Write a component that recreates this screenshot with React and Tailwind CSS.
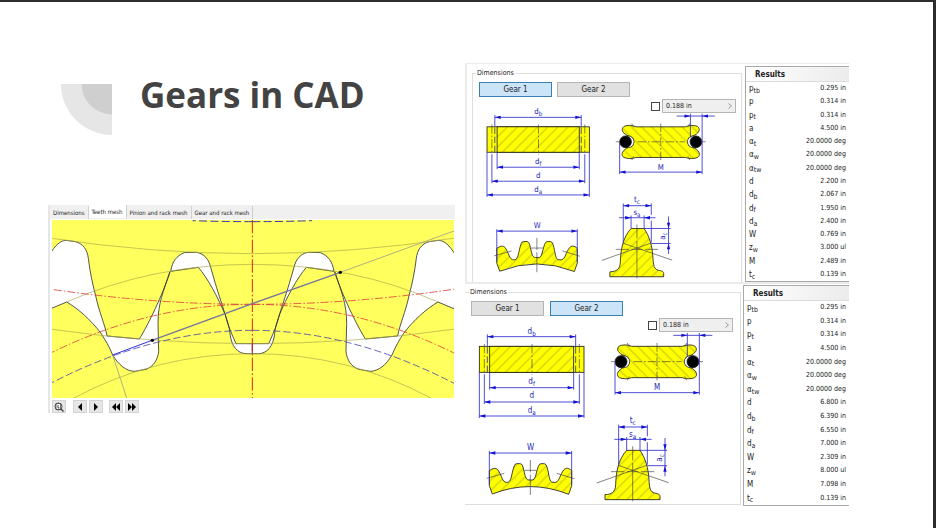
const UI = 'font-["DejaVu_Sans_Condensed","DejaVu_Sans",sans-serif]';
const INK = '#1c1c1c';
const DIM = '#2a2acb';

const RESULTS = [
  ['p', 'tb', '0.295 in', '0.295 in'],
  ['p', '', '0.314 in', '0.314 in'],
  ['p', 't', '0.314 in', '0.314 in'],
  ['a', '', '4.500 in', '4.500 in'],
  ['α', 't', '20.0000 deg', '20.0000 deg'],
  ['α', 'w', '20.0000 deg', '20.0000 deg'],
  ['α', 'tw', '20.0000 deg', '20.0000 deg'],
  ['d', '', '2.200 in', '6.800 in'],
  ['d', 'b', '2.067 in', '6.390 in'],
  ['d', 'f', '1.950 in', '6.550 in'],
  ['d', 'a', '2.400 in', '7.000 in'],
  ['W', '', '0.769 in', '2.309 in'],
  ['z', 'w', '3.000 ul', '8.000 ul'],
  ['M', '', '2.489 in', '7.098 in'],
  ['t', 'c', '0.139 in', '0.139 in'],
];

function HalfMesh() {
  return (
    <g fill="none" strokeWidth="2">
      <g fill="#fff" stroke="#333" strokeWidth="2.5" strokeLinejoin="round">
        <path d="M10 164C28 136 42 122 60 121L88 125C112 131 124 150 127 175C132 215 139 250 148 283C160 340 176 370 183 408L280 417C306 375 350 285 372 215C352 275 336 310 336 370L338 455C335 480 322 500 300 508L265 514C240 513 218 495 200 465C190 440 178 420 165 400C135 360 95 325 62 306L10 328Z" />
        <path d="M374 214L457 202C485 235 515 290 538 345C527 310 512 265 505 240L492 195C485 170 465 158 450 157L415 158C390 168 379 185 374 214Z" />
        <path d="M538 345C545 375 552 390 570 431H619V461H600C575 460 556 440 552 400C550 380 545 365 538 345Z" />
      </g>
      <g stroke="#a9a94c">
        <path d="M10 114Q320 161 619 161" />
        <path d="M62 306Q320 193 619 193" />
        <path d="M10 387Q320 431 619 431" />
        <path d="M80 596Q330 461 619 461" />
      </g>
      <g stroke="#e04040" strokeWidth="2.5" strokeDasharray="24 6 5 6">
        <path d="M619 313Q320 313 10 267" />
        <path d="M619 313Q310 313 10 461" />
      </g>
      <path d="M619 391Q320 391 10 552" stroke="#4a4aa8" strokeWidth="2.5" strokeDasharray="22 9" />
      <path d="M619 65Q530 65 440 62" stroke="#3a3aa8" strokeWidth="3" strokeDasharray="24 10" />
    </g>
  );
}

function MeshDrawing() {
  return (
    <svg viewBox="18 60 1206 534" className="block w-full bg-[#ffff5e]" role="img" aria-label="Teeth mesh">
      <HalfMesh />
      <g transform="matrix(-1 0 0 1 1238 0)"><HalfMesh /></g>
      <path d="M619 60V594" stroke="#e02020" strokeWidth="3" strokeDasharray="40 7 5 7" />
      <path d="M883 217L1224 93M200 465L242 594" stroke="#a0a08c" strokeWidth="2.5" />
      <path d="M318 421L619 311L883 217" fill="none" stroke="#77779c" strokeWidth="4.5" />
      <path d="M200 465L318 421" stroke="#3030e0" strokeWidth="3" />
      <circle cx="319" cy="421" r="5" />
      <circle cx="883" cy="217" r="5" />
    </svg>
  );
}

function Arrow({ x, y, turn }) {
  return <path d="M0 0L-18 -5V5Z" transform={`translate(${x} ${y}) rotate(${turn})`} fill="#1010d8" stroke="none" />;
}

function Span({ x1, x2, y }) {
  return (
    <>
      <path d={`M${x1} ${y}H${x2}`} />
      <Arrow x={x1} y={y} turn={180} />
      <Arrow x={x2} y={y} turn={0} />
    </>
  );
}

function Mark({ x, y, base, sub, turn = 0 }) {
  return (
    <text
      transform={`translate(${x} ${y}) rotate(${turn})`}
      textAnchor="middle"
      fill="#2626b8"
      stroke="none"
      className='font-["DejaVu_Sans_Condensed","DejaVu_Sans",sans-serif] text-[24px]'
    >
      {base}
      {sub && <tspan dy="6" fontSize="19">{sub}</tspan>}
    </text>
  );
}

const PIN_GEAR = 'M500 190C490 184 470 185 463 189C454 197 457 207 471 215L490 224Q496 236 490 248L471 256C455 266 454 278 463 284C472 288 490 289 500 284H652C662 289 680 288 689 284C698 278 697 266 681 256L662 248Q656 236 662 224L681 215C695 207 698 197 689 189C682 185 662 184 652 190Z';
const RIM = 'M73 563C84 555 92 554 98 560C110 575 112 600 125 598C140 600 138 575 148 548Q150 542 155 542H166Q172 543 174 552C180 575 181 592 192 591H200C212 592 211 575 220 550Q223 542 228 542H238Q244 543 246 552C253 575 252 599 264 598H272C284 595 284 575 297 560C303 554 310 554 320 563V608L311 634Q196 588 82 633L73 608Z';
const TOOTH = 'M485 502H525C541 525 550 555 552 590C553 615 556 627 568 630C580 632 585 634 585 640V650H420V635C440 634 451 628 452 605C453 570 459 530 485 502Z';

function GearDrawing({ id }) {
  const fill = `url(#${id})`;
  const reverse = `url(#${id}-reverse)`;
  return (
    <svg viewBox="0 120 810 540" className="col-start-1 row-start-1 block w-full" role="img" aria-label="Gear dimensions">
      <defs>
        <pattern id={id} width="22" height="22" patternUnits="userSpaceOnUse" patternTransform="rotate(45)">
          <rect width="22" height="22" fill="#ffff00" />
          <path d="M11 0V22" stroke="#a2a222" strokeWidth="2" />
        </pattern>
        <pattern id={`${id}-reverse`} width="22" height="22" patternUnits="userSpaceOnUse" patternTransform="rotate(-45)">
          <rect width="22" height="22" fill="#ffff00" />
          <path d="M11 0V22" stroke="#a2a222" strokeWidth="2" />
        </pattern>
      </defs>

      <g fill="none" stroke={INK} strokeWidth="2.5">
        <rect x="43" y="190" width="314" height="78" fill="#ffff00" />
        <rect x="74" y="190" width="252" height="78" fill={fill} />
        <path d={PIN_GEAR} fill={reverse} />
        <path d={RIM} fill={fill} />
        <path d={TOOTH} fill={fill} />
        <circle cx="476" cy="236" r="18" fill="#fff" strokeWidth="2" />
        <circle cx="676" cy="236" r="18" fill="#fff" strokeWidth="2" />
        <circle cx="468" cy="236" r="18" fill="#000" />
        <circle cx="684" cy="236" r="18" fill="#000" />
      </g>

      <g fill="none" stroke="#444" strokeWidth="2">
        <path d="M201 183V275M58 183V275M343 183V275" strokeDasharray="28 6 5 6" />
        <path d="M576 180V294M505 236H650M487 180L493 192M665 180L659 192M487 292L493 280M665 292L659 280" strokeDasharray="26 6 5 6" />
        <path d="M438 236H452M700 236H714" />
        <path d="M196 531V568M196 575V636M178 562H214M65 586L118 571M275 571L328 587" />
        <path d="M503 490V532M503 540V655M395 600L545 547M611 599L460 547M438 566H478M486 566H520M528 566H568" />
      </g>
      <path d="M67 192V268M332 192V268" stroke="#3333aa" strokeWidth="2.5" strokeDasharray="20 8" />

      <g fill="none" stroke={DIM} strokeWidth="2.5">
        <path d="M67 154V190M332 154V190M74 268V320M326 268V320M58 275V363M343 275V363M43 268V405M357 268V405" />
        <Span x1={67} x2={332} y={161} />
        <Span x1={74} x2={326} y={314} />
        <Span x1={58} x2={343} y={357} />
        <Span x1={43} x2={357} y={399} />

        <path d="M450 240V335M703 150V335M667 150V222M625 157H742" />
        <Span x1={450} x2={703} y={329} />
        <Arrow x={667} y={157} turn={0} />
        <Arrow x={703} y={157} turn={180} />

        <path d="M73 504V605M320 504V605" />
        <Span x1={73} x2={320} y={510} />

        <path d="M461 425V545M547 425V460M547 478V545M485 462V502M525 462V502M448 469H560M525 502H606M547 548H606M600 465V580" />
        <Span x1={461} x2={547} y={432} />
        <Arrow x={485} y={469} turn={0} />
        <Arrow x={525} y={469} turn={180} />
        <Arrow x={600} y={502} turn={90} />
        <Arrow x={600} y={548} turn={-90} />
      </g>

      <Mark x={200} y={152} base="d" sub="b" />
      <Mark x={200} y={304} base="d" sub="f" />
      <Mark x={200} y={346} base="d" />
      <Mark x={200} y={390} base="d" sub="a" />
      <Mark x={576} y={321} base="M" />
      <Mark x={197} y={501} base="W" />
      <Mark x={503} y={421} base="t" sub="c" />
      <Mark x={503} y={461} base="s" sub="a" />
      <Mark x={590} y={525} base="a" sub="c" turn={-90} />
    </svg>
  );
}

function GearButton({ active, children }) {
  const tone = active ? 'border-[#3c7fb1] bg-[#cce4f7]' : 'border-[#b4b4b4] bg-[#e1e1e1]';
  return (
    <button type="button" aria-pressed={active} className={`h-[15px] w-[73px] border text-[8px] leading-3 text-[#222] ${tone}`}>
      {children}
    </button>
  );
}

function PinSize({ id, className }) {
  return (
    <div className={`z-10 col-start-1 row-start-1 flex items-center gap-[2px] self-start justify-self-end ${className}`}>
      <input type="checkbox" aria-label="Custom pin size" className="size-[9px] appearance-none border border-[#444] bg-white" />
      <div className="flex h-[14px] w-[74px] items-center border border-[#b5b5b5] bg-[#efefef] px-[3px]">
        <input id={id} aria-label="Pin size" defaultValue="0.188 in" className="w-full min-w-0 flex-1 bg-transparent text-[7px] leading-3 text-[#222] outline-none" />
        <button type="button" aria-label="More sizes">
          <svg viewBox="0 0 4 6" className="h-[6px] w-1" fill="none" stroke="#999" strokeWidth="1"><path d="M.5 .5L3.5 3L.5 5.5" /></svg>
        </button>
      </div>
    </div>
  );
}

function Results({ gear, className }) {
  return (
    <section className={`flex flex-none flex-col border border-r-0 border-[#a9a9a9] bg-white ${className}`}>
      <h2 className="h-[15px] flex-none border-b border-[#dcdcdc] bg-linear-to-r from-white to-[#ececec] pl-[9px] text-[8px] leading-[15px] font-bold text-[#222]">
        Results
      </h2>
      <table className="w-full flex-1 text-[7px] leading-[9px] text-[#222]">
        <tbody>
          {RESULTS.map((row) => (
            <tr key={row[0] + row[1]} className="h-[13px]">
              <th scope="row" className="pl-[3px] text-left text-[8px] font-normal">
                {row[0]}
                {row[1] && <sub className="text-[7px] leading-none">{row[1]}</sub>}
              </th>
              <td className="pr-[3px] text-right whitespace-nowrap">{row[gear + 1]}</td>
            </tr>
          ))}
        </tbody>
      </table>
    </section>
  );
}

function TopPanel() {
  return (
    <article className="flex h-[219px] gap-[3px] border-t border-l-2 border-[#ebebeb] pl-[5px]">
      <fieldset className="mt-1 min-w-0 flex-1 border border-b-0 border-[#dedede] px-[6px]">
        <legend className="-ml-[3px] px-[1px] text-[7px] leading-[10px] text-[#222]">Dimensions</legend>
        <div className="mt-[4px] flex gap-[5px]">
          <GearButton active>Gear 1</GearButton>
          <GearButton>Gear 2</GearButton>
        </div>
        <div className="-mx-[6px] mt-[2px] grid">
          <PinSize id="pin-one" className="mr-[5px]" />
          <div className="col-start-1 row-start-1 mt-[5px] mr-1"><GearDrawing id="hatch-one" /></div>
        </div>
      </fieldset>
      <Results gear={1} className="mt-[2px] w-[104px]" />
    </article>
  );
}

function BottomPanel() {
  return (
    <article className="flex h-[225px] gap-[2px] border-t-2 border-[#ebebeb]">
      <fieldset className="mt-[3px] mb-[2px] min-w-0 flex-1 border border-l-0 border-[#dedede]">
        <legend className="ml-1 px-[1px] text-[7px] leading-[10px] text-[#222]">Dimensions</legend>
        <div className="mt-[4px] ml-[6px] flex gap-[6px]">
          <GearButton>Gear 1</GearButton>
          <GearButton active>Gear 2</GearButton>
        </div>
        <div className="mt-[2px] grid">
          <PinSize id="pin-two" className="mr-[7px]" />
          <div className="col-start-1 row-start-1 mt-[5px] mr-[5px]"><GearDrawing id="hatch-two" /></div>
        </div>
      </fieldset>
      <Results gear={2} className="mt-[1px] mb-[1px] w-[106px] border-b" />
    </article>
  );
}

function ToolButton({ label, children }) {
  return (
    <button type="button" aria-label={label} className="flex h-[13px] w-[14px] items-center justify-center border border-[#d4d4d4] bg-[#e6e6e6]">
      <svg viewBox="0 0 12 12" className="size-3 flex-none">{children}</svg>
    </button>
  );
}

function MeshPanel() {
  const tab = 'h-[13px] border-r border-[#cfcfcf] px-[3px] text-[6px] leading-[13px] text-[#222] whitespace-nowrap';
  return (
    <article className="border-l-2 border-[#e6e6e6] bg-white">
      <div role="tablist" className="flex h-[14px] items-end bg-[#f0f0f0]">
        <button type="button" role="tab" className={tab}>Dimensions</button>
        <button type="button" role="tab" aria-selected="true" className={`${tab} self-stretch bg-white`}>Teeth mesh</button>
        <button type="button" role="tab" className={tab}>Pinion and rack mesh</button>
        <button type="button" role="tab" className={tab}>Gear and rack mesh</button>
      </div>
      <div className="pt-[1px] pr-[1px] pl-[2px]"><MeshDrawing /></div>
      <div className="mt-[2px] flex pl-[2px]">
        <ToolButton label="Zoom">
          <g fill="none" stroke="#444" strokeWidth="1">
            <path d="M3 2.500H7.500V8.500H3Z" fill="#fff" strokeWidth=".7" />
            <circle cx="5.500" cy="5.500" r="3.500" />
            <path d="M5 4V7H6.500" />
            <path d="M8 8L10.500 10.500" strokeWidth="1.500" />
          </g>
        </ToolButton>
        <div className="ml-[7px] flex gap-[2px]">
          <ToolButton label="Step back"><path d="M8 2V10L4 6Z" /></ToolButton>
          <ToolButton label="Step forward"><path d="M4 2V10L8 6Z" /></ToolButton>
        </div>
        <div className="ml-[6px] flex gap-[2px]">
          <ToolButton label="Rewind"><path d="M6 2V10L2 6ZM10 2V10L6 6Z" /></ToolButton>
          <ToolButton label="Fast forward"><path d="M2 2V10L6 6ZM6 2V10L10 6Z" /></ToolButton>
        </div>
      </div>
    </article>
  );
}

export default function App() {
  return (
    <main className={`grid min-h-screen grid-cols-[407fr_384fr] content-start items-start gap-[10px] border-t-2 border-r-3 border-[#2d2d2d] bg-white pr-[84px] pl-12 ${UI}`}>
      <div className="pt-[70px]">
        <header className="flex gap-7 pl-[13px]">
          <svg viewBox="0 0 52 52" className="mt-3 size-[51px]" aria-hidden="true">
            <path d="M0 0H52V52A52 52 0 0 1 0 0Z" fill="#e6e6e6" />
            <path d="M21 0H52V31A31 31 0 0 1 21 0Z" fill="#cfcfcf" />
          </svg>
          <h1 className='font-["Open_Sans",sans-serif] text-[35px] leading-[46px] font-bold whitespace-nowrap text-[#434343]'>Gears in CAD</h1>
        </header>
        <div className="mt-[70px]"><MeshPanel /></div>
      </div>
      <div className="pt-[61px]">
        <TopPanel />
        <BottomPanel />
      </div>
    </main>
  );
}
